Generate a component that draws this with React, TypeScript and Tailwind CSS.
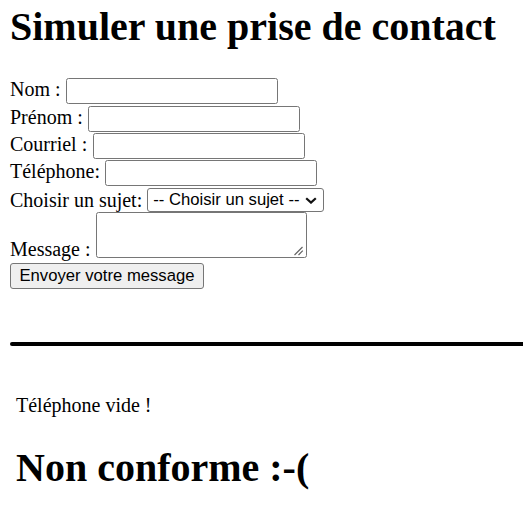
import React from "react";

function TextRow({ label }: { label: string }) {
  return (
    <div className="flex h-[27.33px] items-baseline gap-[5.5px]">
      <span className="leading-[22px]">{label}</span>
      <input
        type="text"
        className="box-border h-[26px] w-[212px] rounded-[2.5px] border border-[#767676] bg-white px-[3px] font-['Liberation_Sans',Arial,sans-serif] text-[16.67px] leading-[19px] text-black outline-none"
      />
    </div>
  );
}

export default function App() {
  return (
    <div className="min-h-[515px] w-[523px] overflow-hidden bg-white pl-[10px] pt-[4.5px] font-['Liberation_Serif','Times_New_Roman',serif] text-[20px] text-black">
      <h1 className="text-[40px] font-bold leading-[44px]">Simuler une prise de contact</h1>

      <form className="mt-[29.8px] flex flex-col" onSubmit={(e) => e.preventDefault()}>
        <TextRow label="Nom :" />
        <TextRow label="Prénom :" />
        <TextRow label="Courriel :" />
        <TextRow label="Téléphone:" />

        <div className="flex h-[24.4px] items-center gap-[5px]">
          <span className="leading-[22px]">Choisir un sujet:</span>
          <div className="relative flex">
            <select
              defaultValue=""
              className="box-border block h-[23.4px] w-[176.3px] appearance-none rounded-[3px] border border-[#767676] bg-white pl-[5px] font-['Liberation_Sans',Arial,sans-serif] text-[16.67px] leading-[19px] text-black outline-none"
            >
              <option value="">-- Choisir un sujet --</option>
            </select>
            <svg
              className="pointer-events-none absolute right-[6.5px] top-[9.2px]"
              width="12"
              height="7"
              viewBox="0 0 12 7"
            >
              <path d="M1.2 1.2 L6 5.6 L10.8 1.2" fill="none" stroke="#111" strokeWidth="2.2" />
            </svg>
          </div>
        </div>

        <div className="mt-[0.2px] flex items-end gap-[5px]">
          <span className="leading-[22px]">Message :</span>
          <div className="relative mb-[2.6px]">
            <textarea className="box-border block h-[45.4px] w-[211px] resize-none rounded-[2.5px] border border-[#767676] bg-white outline-none" />
            <svg
              className="pointer-events-none absolute bottom-[2px] right-[3px]"
              width="11"
              height="10"
              viewBox="0 0 11 10"
            >
              <path d="M1.5 9 L9.5 1" stroke="#5e5e5e" strokeWidth="1.1" />
              <path d="M5.5 9 L9.8 4.7" stroke="#5e5e5e" strokeWidth="1.1" />
            </svg>
          </div>
        </div>

        <div className="mt-[2.7px] flex">
          <button
            type="submit"
            className="box-border h-[26px] w-[194px] rounded-[3px] border border-[#767676] bg-[#efefef] font-['Liberation_Sans',Arial,sans-serif] text-[16.67px] leading-[19px] text-black"
          >
            Envoyer votre message
          </button>
        </div>
      </form>

      <div className="mt-[52.8px] h-[4.8px] w-[540px] rounded-l-full bg-black" />

      <p className="ml-[6px] mt-[47.5px] leading-[22px]">Téléphone vide !</p>

      <h1 className="ml-[6px] mt-[30.2px] text-[40px] font-bold leading-[44px]">Non conforme :-(</h1>
    </div>
  );
}
